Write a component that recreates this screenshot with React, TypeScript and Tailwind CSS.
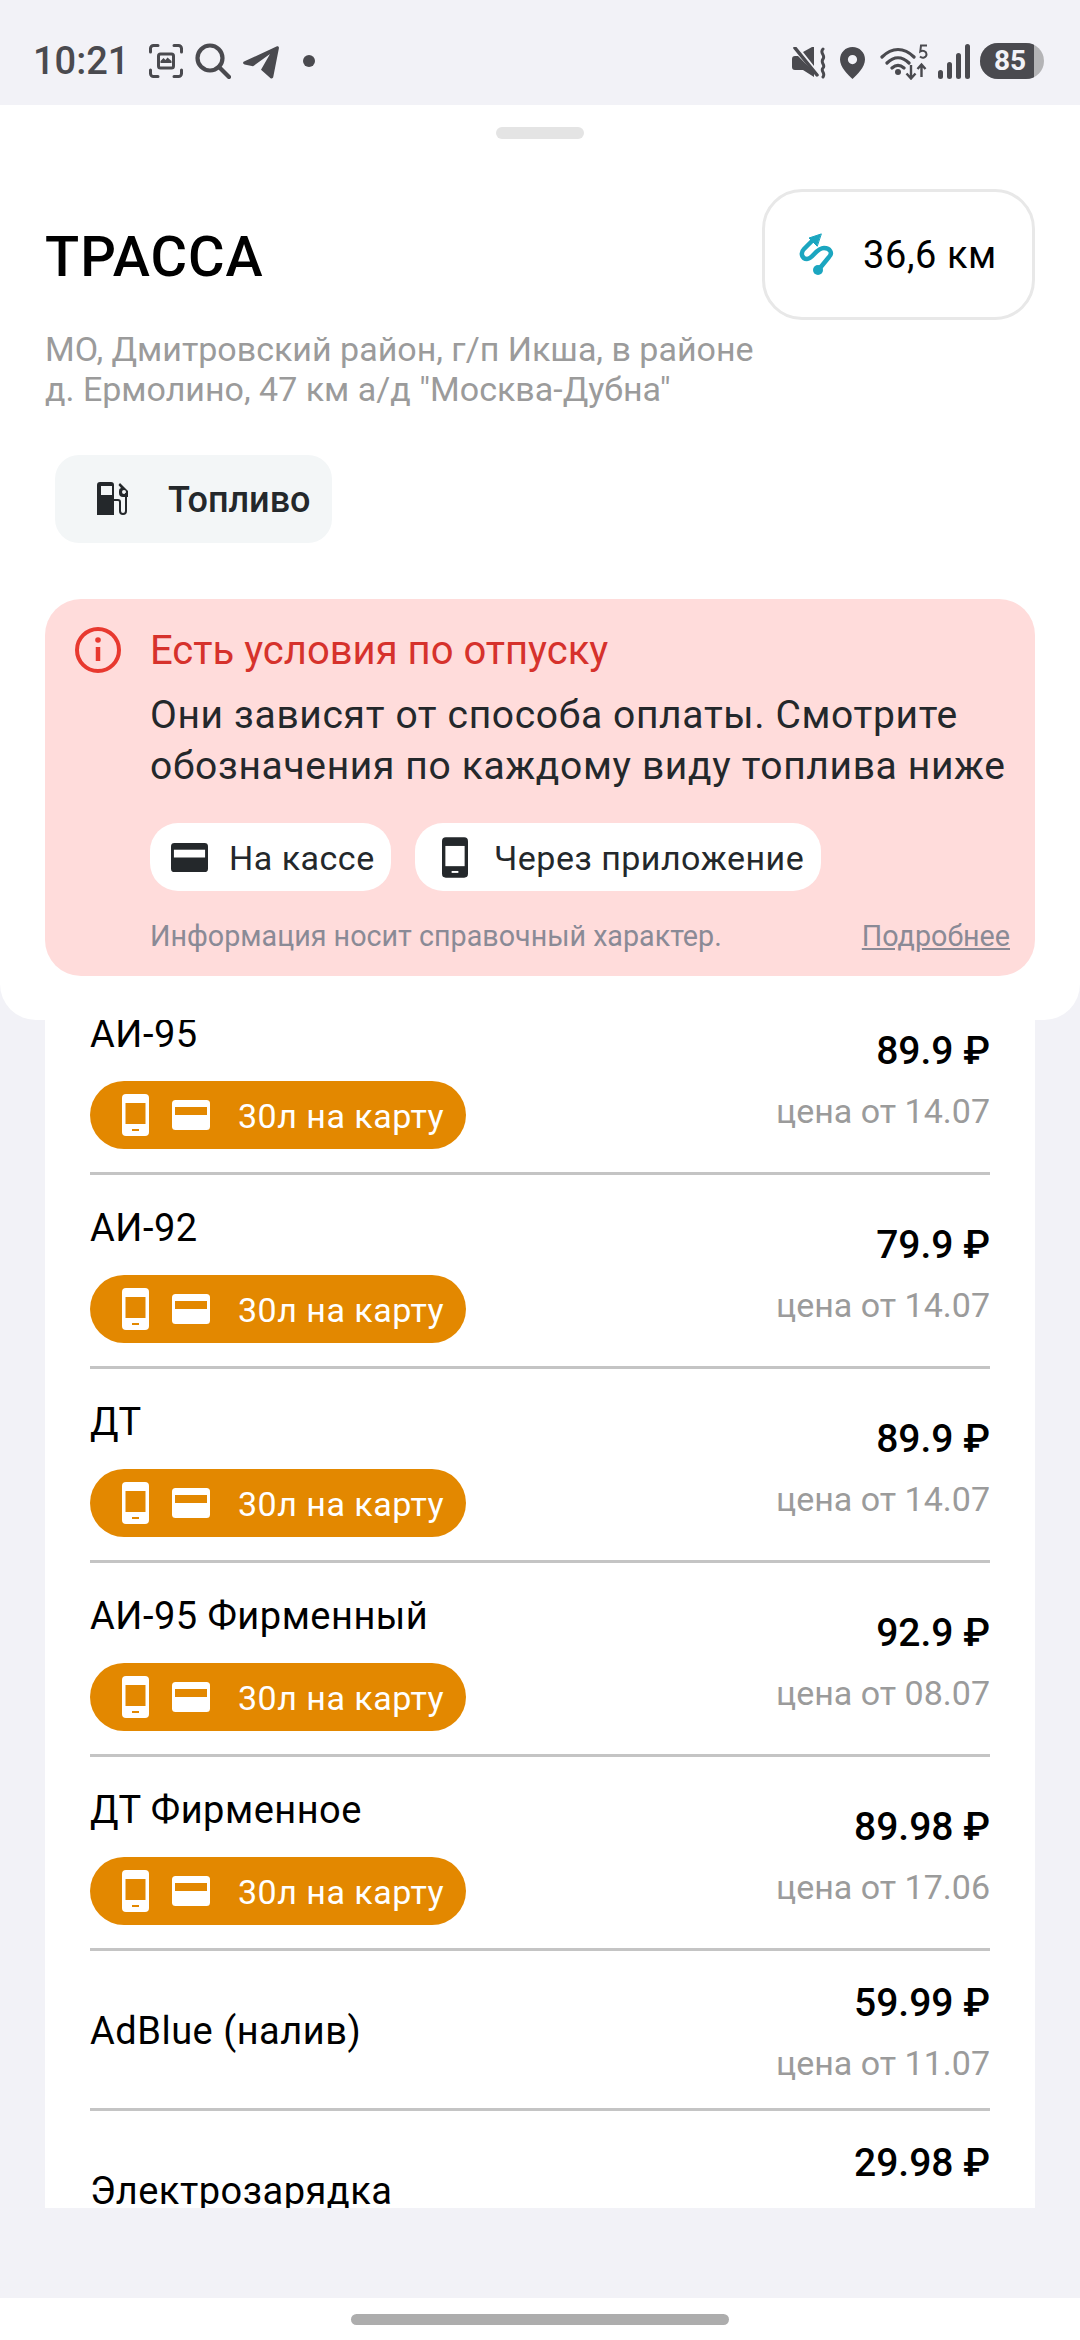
import React from "react"

const fuels = [
  { name: "АИ-95", price: "89.9 ₽", date: "цена от 14.07", promo: true },
  { name: "АИ-92", price: "79.9 ₽", date: "цена от 14.07", promo: true },
  { name: "ДТ", price: "89.9 ₽", date: "цена от 14.07", promo: true },
  { name: "АИ-95 Фирменный", price: "92.9 ₽", date: "цена от 08.07", promo: true },
  { name: "ДТ Фирменное", price: "89.98 ₽", date: "цена от 17.06", promo: true },
  { name: "AdBlue (налив)", price: "59.99 ₽", date: "цена от 11.07", promo: false },
  { name: "Электрозарядка", price: "29.98 ₽", date: "", promo: false },
]

const PhoneIcon = ({ body, cut, className }: { body: string; cut: string; className: string }) => (
  <svg viewBox="0 0 27 42" className={className}>
    <rect width="27" height="42" rx="4" fill={body} />
    <rect x="3.5" y="9" width="20" height="21" fill={cut} />
    <rect x="10" y="35" width="7" height="2" fill={cut} />
  </svg>
)

const CardIcon = ({ body, cut, className }: { body: string; cut: string; className: string }) => (
  <svg viewBox="0 0 38 30" className={className}>
    <rect width="38" height="30" rx="3.5" fill={body} />
    <rect x="3" y="7" width="32" height="8" fill={cut} />
  </svg>
)

const StatusBar = () => (
  <div className="flex h-[105px] items-start bg-[#f2f2f7] pl-[33px] pr-[36px] pt-[43px] text-[#4a4a4f]">
    <span className="mt-[-3px] text-[38px] leading-[42px] font-medium">10:21</span>
    {/* screenshot */}
    <svg viewBox="0 0 34 34" fill="none" stroke="currentColor" strokeWidth="3" strokeLinecap="round" className="ml-[20px] mt-[1px] h-[34px] w-[34px]">
      <path d="M1.5 8V4.5a3 3 0 0 1 3-3H9M25 1.5h4.5a3 3 0 0 1 3 3V8M32.500 26v3.500a3 3 0 0 1-3 3H25M9 32.500H4.500a3 3 0 0 1-3-3V26" />
      <rect x="9.500" y="10" width="15" height="14" rx="2" strokeWidth="3" />
      <path d="M11.500 17l3-3 2 2 2-2.500 4 3.500v2h-11z" fill="currentColor" stroke="none" />
    </svg>
    {/* search */}
    <svg viewBox="0 0 36 36" fill="none" stroke="currentColor" strokeWidth="4.200" strokeLinecap="round" className="ml-[12px] h-[36px] w-[36px]">
      <circle cx="15" cy="15" r="12.500" />
      <path d="M24 24l10 10" />
    </svg>
    {/* telegram */}
    <svg viewBox="0 0 36 33" fill="currentColor" className="ml-[12px] mt-[3px] h-[33px] w-[36px]">
      <path d="M1 15.500L33.500.5c1.500-.7 2.700.3 2.400 1.800l-5.600 28.500c-.3 1.700-1.800 2.200-3 1.100l-9.300-8.100 9-15.800-17 12.300L1.500 18.500C-.3 17.800-.3 16.200 1 15.500z" />
    </svg>
    <span className="ml-[24px] mt-[12px] h-[12px] w-[12px] rounded-full bg-current" />
    <div className="flex-1" />
    {/* muted */}
    <svg viewBox="0 0 36 32" fill="currentColor" className="mt-[4px] h-[32px] w-[36px]">
      <path d="M0 12a3 3 0 0 1 3-3h3l16 16v5l-11-7H3a3 3 0 0 1-3-3zM11 5l9-5h2v19z" />
      <path d="M3 1l22 27" stroke="currentColor" strokeWidth="3.500" strokeLinecap="round" />
      <path d="M31 2c-4 4 3 6 0 10-3 4 3 6 0 9-3 3 3 5 0 9" fill="none" stroke="currentColor" strokeWidth="3" strokeLinecap="round" />
    </svg>
    {/* location */}
    <svg viewBox="0 0 25 32" className="ml-[12px] mt-[4px] h-[32px] w-[25px]">
      <path fillRule="evenodd" fill="currentColor" d="M12.500 0C5.500 0 0 5.500 0 12.500 0 20 8 28 12.500 32 17 28 25 20 25 12.500 25 5.500 19.500 0 12.500 0zm0 8a4.600 4.600 0 1 1 0 9.200 4.600 4.600 0 0 1 0-9.200z" />
    </svg>
    {/* wifi 5 */}
    <svg viewBox="0 0 48 36" fill="none" stroke="currentColor" className="ml-[15px] mt-[1px] h-[36px] w-[48px]">
      <path d="M2 13C12 3 24 3 34 13M7 19c7-7 15-7 22 0M12 24c4-3.500 8-3.500 12 0" strokeWidth="3.200" strokeLinecap="round" />
      <circle cx="18" cy="28" r="3" fill="currentColor" stroke="none" />
      <path d="M31 21v13M26.500 29.500l4.500 5 4.500-5M41.500 33V21M37.500 25l4-4.500 4 4.500" strokeWidth="2.400" />
      <path d="M47 1.500h-6l-.7 6c2.500-1.600 6.200-.4 6.200 2.800 0 3.300-4.200 4.400-6.500 2.200" strokeWidth="2" />
    </svg>
    {/* signal */}
    <svg viewBox="0 0 32 35" fill="currentColor" className="ml-[10px] mt-[1px] h-[35px] w-[32px]">
      <rect x="0" y="26" width="5" height="9" rx="2.500" />
      <rect x="9" y="18" width="5" height="17" rx="2.500" />
      <rect x="18" y="9" width="5" height="26" rx="2.500" />
      <rect x="27" y="0" width="5" height="35" rx="2.500" />
    </svg>
    {/* battery */}
    <div className="relative ml-[10px] flex h-[36px] w-[64px] items-center overflow-hidden rounded-[18px] bg-[#b4b4b6]">
      <div className="flex h-full w-[54px] items-center justify-center bg-[#4a4a4f] pl-[6px] text-[28px] leading-none font-bold text-[#f2f2f7]">85</div>
    </div>
  </div>
)

const Sheet = () => (
  <div className="relative z-10 h-[915px] rounded-b-[36px] bg-white px-[45px]">
    <div className="flex justify-center pt-[22px]">
      <div className="h-[12px] w-[88px] rounded-[6px] bg-[#e4e4e4]" />
    </div>
    <div className="mt-[50px] flex items-start justify-between">
      <h1 className="mt-[36px] text-[56px] leading-[64px] font-medium tracking-[1px] text-black">ТРАССА</h1>
      <div className="flex h-[131px] w-[273px] items-center rounded-[40px] border-[3px] border-[#e8e8e8] pl-[21px]">
        <svg viewBox="0 0 60 60" fill="none" stroke="#1ba6c0" strokeWidth="4.500" strokeLinecap="round" strokeLinejoin="round" className="h-[60px] w-[60px]">
          <path d="M27 15L18 24C14 28 16 34 21 34C27 34 30 23 38 23C44 23 47 28 43 32L34 43" />
          <path d="M35 9L23 13L31 21Z" fill="#1ba6c0" strokeWidth="1" />
          <circle cx="32" cy="45" r="5" fill="#1ba6c0" stroke="none" />
        </svg>
        <span className="ml-[17px] text-[38px] leading-[44px] tracking-[0.6px] text-black">36,6 км</span>
      </div>
    </div>
    <p className="mt-[9px] w-[760px] text-[34px] leading-[40px] text-[#9b9b9b]">
      МО, Дмитровский район, г/п Икша, в районе
      <br />
      д. Ермолино, 47 км а/д "Москва-Дубна"
    </p>
    <div className="ml-[10px] mt-[46px] flex h-[88px] w-[277px] items-center rounded-[24px] bg-[#f3f6f7] pl-[30px]">
      <svg viewBox="0 0 60 60" className="h-[60px] w-[60px]">
        <path fillRule="evenodd" fill="#24282b" d="M15 13h11a3 3 0 0 1 3 3v30H12V16a3 3 0 0 1 3-3zm1 4v9h11v-9z" />
        <path d="M29 31h4a2 2 0 0 1 2 2v9a3 3 0 0 0 6 0V24" fill="none" stroke="#24282b" strokeWidth="2" />
        <path fillRule="evenodd" fill="#24282b" d="M35 14l8 8v6h-5a4 4 0 0 1-4-4v-2a3 3 0 0 1 2-3l-2.500-3zm4 7a2 2 0 1 0 0 4 2 2 0 0 0 0-4z" />
      </svg>
      <span className="ml-[23px] mt-[2px] text-[36px] leading-[42px] font-medium text-[#24282b]">Топливо</span>
    </div>
    <div className="mt-[56px] h-[377px] rounded-[36px] bg-[#ffdcdb] pl-[105px] pr-[25px]">
      <div className="relative pt-[29px]">
        <svg viewBox="0 0 46 46" fill="none" stroke="#e8392f" strokeWidth="4" className="absolute left-[-75px] top-[28px] h-[46px] w-[46px]">
          <circle cx="23" cy="23" r="21" />
          <path d="M23 20v14" strokeWidth="4.500" />
          <circle cx="23" cy="13" r="2.800" fill="#e8392f" stroke="none" />
        </svg>
        <div className="text-[40px] leading-[46px] text-[#d6322c]">Есть условия по отпуску</div>
      </div>
      <p className="mt-[16px] text-[39px] leading-[51px] tracking-[0.65px] whitespace-nowrap text-[#24282b]">
        Они зависят от способа оплаты. Смотрите
        <br />
        обозначения по каждому виду топлива ниже
      </p>
      <div className="mt-[31px] flex gap-[24px]">
        <div className="flex h-[68px] w-[241px] items-center rounded-[28px] bg-white pl-[21px]">
          <CardIcon body="#24282b" cut="#ffffff" className="h-[31px] w-[37px]" />
          <span className="ml-[21px] mt-[1px] text-[34px] leading-[40px] tracking-[0.5px] text-[#24282b]">На кассе</span>
        </div>
        <div className="flex h-[68px] w-[406px] items-center rounded-[28px] bg-white pl-[27px]">
          <PhoneIcon body="#24282b" cut="#ffffff" className="h-[41px] w-[26px]" />
          <span className="ml-[26px] mt-[1px] text-[34px] leading-[40px] tracking-[0.5px] text-[#24282b]">Через приложение</span>
        </div>
      </div>
      <div className="mt-[27px] flex items-center justify-between text-[28.700px] leading-[36px] text-[#8a8a96]">
        <span>Информация носит справочный характер.</span>
        <span className="underline">Подробнее</span>
      </div>
    </div>
  </div>
)

const FuelRow = ({ name, price, date, promo }: (typeof fuels)[number]) => (
  <div className={`flex justify-between border-b-[3px] border-[#c4c4c4] ${promo ? "h-[194px]" : "h-[160px] items-center"}`}>
    <div className={promo ? "pt-[31px]" : "pt-[3px]"}>
      <div className="text-[38px] leading-[44px] tracking-[0.5px] text-black">{name}</div>
      {promo && (
        <div className="mt-[25px] flex h-[68px] w-[376px] items-center rounded-[34px] bg-[#e38800] pl-[32px] text-white">
          <PhoneIcon body="#ffffff" cut="#e38800" className="h-[42px] w-[27px]" />
          <CardIcon body="#ffffff" cut="#e38800" className="ml-[23px] h-[30px] w-[38px]" />
          <span className="ml-[28px] mt-[1px] text-[34px] leading-[40px] tracking-[0.5px]">30л на карту</span>
        </div>
      )}
    </div>
    <div className={`flex shrink-0 flex-col items-end ${promo ? "pt-[48px]" : "self-start pt-[30px]"}`}>
      <div className="text-[39px] leading-[44px] font-medium text-black">{price}</div>
      {date && <div className="mt-[18px] text-[34px] leading-[40px] text-[#9b9b9b]">{date}</div>}
    </div>
  </div>
)

export default function App() {
  return (
    <div className="flex h-[2340px] w-[1080px] flex-col overflow-hidden bg-[#f2f2f7] font-['Roboto',sans-serif]">
      <StatusBar />
      <Sheet />
      <div className="mx-[45px] mt-[-39px] h-[1227px] overflow-hidden bg-white px-[45px]">
        {fuels.map((f) => (
          <FuelRow key={f.name} {...f} />
        ))}
      </div>
      <div className="flex-1" />
      <div className="flex h-[42px] justify-center bg-white pt-[16px]">
        <div className="h-[11px] w-[378px] rounded-[6px] bg-[#adadad]" />
      </div>
    </div>
  )
}
